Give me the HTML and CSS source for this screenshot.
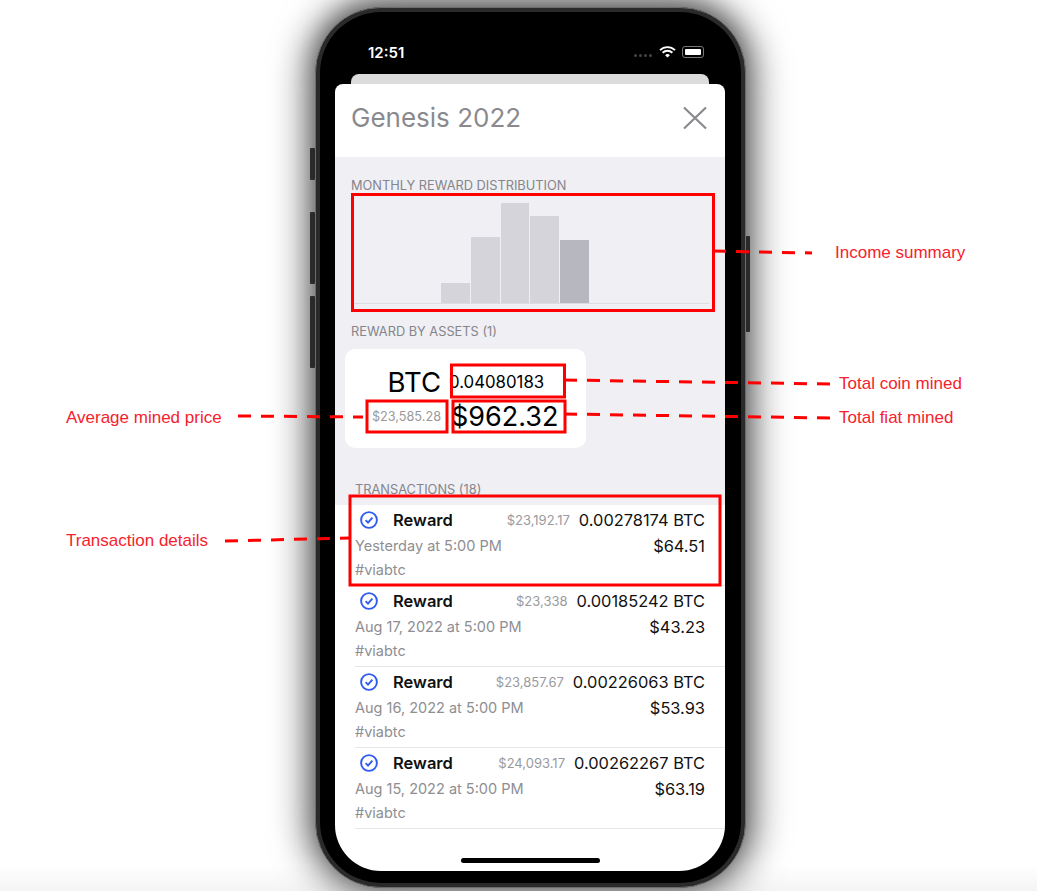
FILE: index.html
```html
<!DOCTYPE html>
<html>
<head>
    <meta charset="utf-8">
    <title>Genesis 2022</title>
    <link rel="stylesheet" href="styles.css">
</head>
<body>
<div class="stage">
    <div class="phone">
        <span class="side-btn btn-mute"></span>
        <span class="side-btn btn-up"></span>
        <span class="side-btn btn-down"></span>
        <span class="side-btn btn-power"></span>

        <div class="status-bar">
            <span class="time">12:51</span>
            <div class="status-icons">
                <span class="signal"><i></i><i></i><i></i><i></i></span>
                <svg class="wifi" width="17" height="12" viewBox="0 0 17 12">
                    <path d="M1 4.2a10.6 10.6 0 0 1 15 0" fill="none" stroke="#fff" stroke-width="1.9"/>
                    <path d="M3.6 6.8a7 7 0 0 1 9.8 0" fill="none" stroke="#fff" stroke-width="1.9"/>
                    <path d="M6.1 9.2a3.4 3.4 0 0 1 4.8 0L8.5 11.6z" fill="#fff"/>
                </svg>
                <span class="battery"><i></i></span>
            </div>
        </div>

        <div class="sheet-back"></div>

        <div class="screen">
            <div class="sheet-head">
                <h1>Genesis 2022</h1>
                <svg class="close" width="24" height="24" viewBox="0 0 24 24">
                    <path d="M1 1.5l22 21M23 1.5L1 22.500" stroke="#8a8a8e" stroke-width="2.2" fill="none"/>
                </svg>
            </div>

            <div class="sheet-body">
                <div class="label first">MONTHLY REWARD DISTRIBUTION</div>
                <div class="chart">
                    <div class="bar"></div>
                    <div class="bar"></div>
                    <div class="bar"></div>
                    <div class="bar" style="height: 20px"></div>
                    <div class="bar" style="height: 66px"></div>
                    <div class="bar" style="height: 100px"></div>
                    <div class="bar" style="height: 87px"></div>
                    <div class="bar current" style="height: 63px"></div>
                    <div class="bar"></div>
                    <div class="bar"></div>
                    <div class="bar"></div>
                    <div class="bar"></div>
                </div>

                <div class="label assets">REWARD BY ASSETS (1)</div>
                <div class="asset-card">
                    <div class="asset-name">BTC</div>
                    <div class="asset-coin">0.04080183</div>
                    <div class="asset-avg">$23,585.28</div>
                    <div class="asset-fiat">$962.32</div>
                </div>

                <div class="label tx">TRANSACTIONS (18)</div>
            </div>

            <div class="tx-list">
                <div class="tx-row">
                    <div class="tx-top">
                        <svg class="check" width="18" height="18" viewBox="0 0 18 18"><circle cx="9" cy="9" r="7.9"/><path d="M5.6 9.2l2.4 2.4 4.4-5"/></svg>
                        <span class="tx-type">Reward</span>
                        <span class="tx-price">$23,192.17</span>
                        <span class="tx-coin">0.00278174 BTC</span>
                    </div>
                    <div class="tx-mid"><span>Yesterday at 5:00 PM</span><span class="tx-fiat">$64.51</span></div>
                    <div class="tx-tag">#viabtc</div>
                </div>
                <div class="tx-row">
                    <div class="tx-top">
                        <svg class="check" width="18" height="18" viewBox="0 0 18 18"><circle cx="9" cy="9" r="7.9"/><path d="M5.6 9.2l2.4 2.4 4.4-5"/></svg>
                        <span class="tx-type">Reward</span>
                        <span class="tx-price">$23,338</span>
                        <span class="tx-coin">0.00185242 BTC</span>
                    </div>
                    <div class="tx-mid"><span>Aug 17, 2022 at 5:00 PM</span><span class="tx-fiat">$43.23</span></div>
                    <div class="tx-tag">#viabtc</div>
                </div>
                <div class="tx-row">
                    <div class="tx-top">
                        <svg class="check" width="18" height="18" viewBox="0 0 18 18"><circle cx="9" cy="9" r="7.9"/><path d="M5.6 9.2l2.4 2.4 4.4-5"/></svg>
                        <span class="tx-type">Reward</span>
                        <span class="tx-price">$23,857.67</span>
                        <span class="tx-coin">0.00226063 BTC</span>
                    </div>
                    <div class="tx-mid"><span>Aug 16, 2022 at 5:00 PM</span><span class="tx-fiat">$53.93</span></div>
                    <div class="tx-tag">#viabtc</div>
                </div>
                <div class="tx-row">
                    <div class="tx-top">
                        <svg class="check" width="18" height="18" viewBox="0 0 18 18"><circle cx="9" cy="9" r="7.9"/><path d="M5.6 9.2l2.4 2.4 4.4-5"/></svg>
                        <span class="tx-type">Reward</span>
                        <span class="tx-price">$24,093.17</span>
                        <span class="tx-coin">0.00262267 BTC</span>
                    </div>
                    <div class="tx-mid"><span>Aug 15, 2022 at 5:00 PM</span><span class="tx-fiat">$63.19</span></div>
                    <div class="tx-tag">#viabtc</div>
                </div>
            </div>

            <div class="home-bar"></div>
        </div>
    </div>

    <!-- annotations drawn on top of the screenshot -->
    <svg class="marks" width="1037" height="891" viewBox="0 0 1037 891">
        <rect x="352.5" y="194.5" width="361" height="116"/>
        <rect x="451.5" y="365" width="113" height="32"/>
        <rect x="367" y="401" width="80" height="31"/>
        <rect x="453" y="401" width="112" height="31"/>
        <rect x="350" y="496" width="370" height="89"/>
        <path class="dash" d="M713 251 L812 253"/>
        <path class="dash" d="M564 380 L831 384"/>
        <path class="dash" d="M564 414 L831 418"/>
        <path class="dash" d="M238 416 L363 417"/>
        <path class="dash" d="M225 541 L349 538"/>
    </svg>
    <div class="note" style="left: 835px; top: 244px">Income summary</div>
    <div class="note" style="left: 839px; top: 375px">Total coin mined</div>
    <div class="note" style="left: 839px; top: 409px">Total fiat mined</div>
    <div class="note" style="left: 66px; top: 409px">Average mined price</div>
    <div class="note" style="left: 66px; top: 532px">Transaction details</div>
</div>
</body>
</html>
```

FILE: styles.css
```css
*{
    box-sizing: border-box;
}

body{
    margin: 0;
    background: #fff;
    font-family: Inter, "Liberation Sans", sans-serif;
}

.stage{
    position: relative;
    width: 1037px;
    height: 891px;
    padding: 7px 0 0 315px;
    overflow: hidden;
    background: linear-gradient(to bottom, #fff 865px, #f4f4f4 891px);
}

/* phone frame */
.phone{
    position: relative;
    width: 431px;
    height: 881px;
    padding: 0 20px 0 19px;
    background: #000;
    border: 1px solid #6b6b6b;
    border-radius: 66px;
    box-shadow: inset 0 0 0 4px #2a2a2a, 0 0 36px 8px rgba(0, 0, 0, .6), 0 -6px 20px rgba(0, 0, 0, .25);
}

.side-btn{
    position: absolute;
    width: 5px;
    background: #2a2a2a;
    border-radius: 1px;
}
.btn-mute{ left: -6px; top: 140px; height: 32px; }
.btn-up{ left: -6px; top: 204px; height: 72px; }
.btn-down{ left: -6px; top: 288px; height: 72px; }
.btn-power{ right: -5px; top: 228px; height: 96px; width: 4px; }

.status-bar{
    display: flex;
    justify-content: space-between;
    align-items: center;
    height: 66px;
    padding: 22px 21px 0 33px;
    color: #fff;
}
.time{
    font-size: 15px;
    font-weight: 600;
}
.status-icons{
    display: flex;
    align-items: center;
    gap: 6px;
}
.signal{
    display: flex;
    gap: 2px;
    margin-top: 6px;
    margin-right: 1px;
}
.signal i{
    width: 3px;
    height: 3px;
    border-radius: 50%;
    background: #444;
}
.battery{
    width: 22px;
    height: 12px;
    padding: 2px;
    border: 1px solid #777;
    border-radius: 3px;
}
.battery i{
    display: block;
    height: 100%;
    background: #fff;
    border-radius: 1px;
}

.sheet-back{
    height: 10px;
    margin: 0 16px;
    background: #dcdcdc;
    border-radius: 8px 8px 0 0;
}

.screen{
    position: relative;
    height: 787px;
    overflow: hidden;
    background: #fff;
    border-radius: 8px 8px 46px 46px;
}

.sheet-head{
    display: flex;
    justify-content: space-between;
    align-items: center;
    height: 73px;
    padding: 0 18px 6px 16px;
}
.sheet-head h1{
    margin: 0;
    font-size: 26px;
    font-weight: 400;
    color: #8a8a8e;
}

.sheet-body{
    height: 348px;
    background: #efeff4;
    overflow: hidden;
}

.label{
    font-size: 12.8px;
    line-height: 16px;
    color: #85858b;
    padding-left: 16px;
}
.label.first{
    padding-top: 21px;
    height: 36px;
}
.label.assets{
    margin-top: 20px;
}
.label.tx{
    margin-top: 34px;
    padding-left: 20px;
}

.chart{
    display: flex;
    align-items: flex-end;
    height: 111px;
    margin-left: 16px;
    margin-right: 16px;
    border-bottom: 1px solid #dcdce2;
}
.bar{
    flex: 1;
    margin: 0 .5px;
    background: #d4d4da;
}
.bar.current{
    background: #b7b7c0;
}

.asset-card{
    display: grid;
    grid-template-columns: 96px auto;
    grid-auto-rows: 34px;
    column-gap: 10px;
    align-items: center;
    width: 241px;
    height: 99px;
    margin: 9px 0 0 10px;
    padding-top: 16px;
    background: #fff;
    border-radius: 10px;
}
.asset-name{
    font-size: 27.500px;
    text-align: right;
}
.asset-coin{
    margin-left: -2px;
    font-size: 16.8px;
}
.asset-avg{
    font-size: 12.7px;
    color: #999;
    text-align: right;
}
.asset-fiat{
    font-size: 27px;
}

.tx-row{
    height: 81px;
    margin-left: 20px;
    padding: 2px 20px 0 0;
    border-bottom: 1px solid #e6e6e8;
}
.tx-top{
    display: flex;
    align-items: center;
    height: 25px;
    padding-left: 5px;
}
.check{
    fill: none;
    stroke: #2f5bf0;
    stroke-width: 1.9;
}
.tx-type{
    margin-left: 15px;
    font-size: 16.5px;
    font-weight: 600;
    color: #111;
}
.tx-price{
    margin-left: auto;
    margin-right: 9px;
    font-size: 13px;
    color: #9a9a9e;
}
.tx-coin,
.tx-fiat{
    font-size: 16.4px;
    color: #111;
}
.tx-mid{
    display: flex;
    justify-content: space-between;
    align-items: center;
    height: 27px;
    font-size: 14.5px;
    color: #8e8e93;
}
.tx-tag{
    height: 23px;
    line-height: 21px;
    font-size: 14.5px;
    color: #8e8e93;
}

.home-bar{
    position: absolute;
    left: 126px;
    bottom: 8px;
    width: 139px;
    height: 5px;
    background: #000;
    border-radius: 3px;
}

/* annotation layer */
.marks{
    position: absolute;
    left: 0;
    top: 0;
}
.marks rect{
    fill: none;
    stroke: #f00;
    stroke-width: 3;
}
.marks .dash{
    fill: none;
    stroke: #f00;
    stroke-width: 3;
    stroke-dasharray: 13 10;
}
.note{
    position: absolute;
    font-family: "Liberation Sans", Arial, sans-serif;
    font-size: 17px;
    line-height: 18px;
    color: #f5222d;
}
```
